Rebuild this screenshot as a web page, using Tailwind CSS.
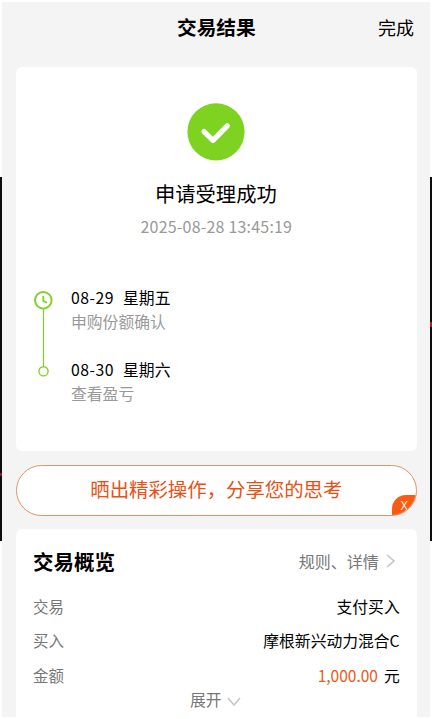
<!DOCTYPE html>
<html lang="zh-CN">
<head>
    <meta charset="UTF-8">
    <meta name="viewport" content="width=device-width, initial-scale=1.0">
    <title>交易结果</title>
    <script src="https://cdn.jsdelivr.net/npm/@tailwindcss/browser@4"></script>
</head>
<body class="relative h-[719px] overflow-hidden bg-white p-[2px] font-['Noto_Sans_CJK_SC',sans-serif] text-black whitespace-nowrap">
    <!-- Dark chart behind the page -->
    <div class="absolute left-0 top-[177px] w-full h-[364px] bg-[#0c0d10]">
        <div class="absolute left-0 top-[296px] w-[2px] h-[3px] bg-[#8c1c24]"></div>
        <div class="absolute right-0 top-[145px] w-[2px] h-[5px] bg-[#a8202a]"></div>
    </div>

    <div id="app" class="relative h-[715px] overflow-hidden bg-[#f4f4f4] pl-[14px] pr-[13.3px]">
        <!-- Header -->
        <header class="grid grid-cols-3 items-center h-[50px] mb-[15px]">
            <h1 class="col-start-2 text-center text-[19.7px] leading-[30px] font-bold">交易结果</h1>
            <button class="text-right text-[18px] leading-[30px] pr-[2.7px]">完成</button>
        </header>

        <!-- Result -->
        <section class="flex flex-col h-[384px] rounded-md bg-white pt-9 px-[17px]">
            <svg class="self-center -ml-px w-[58px] h-[58px]" viewBox="0 0 58 58" fill="none">
                <circle cx="29" cy="28.8" r="28.6" fill="#7ed321"/>
                <path d="M17 28.6 L26 37.3 L40.3 22.8" stroke="#fff" stroke-width="5.2" stroke-linecap="round" stroke-linejoin="round"/>
            </svg>
            <h2 class="mt-[17px] pr-px text-center text-[20.3px] leading-[30px]">申请受理成功</h2>
            <p class="mt-2 text-center text-[16px] leading-5 tracking-[0.2px] text-[#999]">2025-08-28 13:45:19</p>

            <!-- Timeline -->
            <div class="mt-[52px] flex gap-[18px]">
                <svg class="w-5 h-[116px]" viewBox="0 0 20 116" fill="none" stroke="#7ed321">
                    <circle cx="10.3" cy="12.3" r="8.3" stroke-width="1.9"/>
                    <path d="M10.3 8 V13 L14 14.7" stroke-width="1.8"/>
                    <path d="M10.5 21 V78.5" stroke-width="1.2"/>
                    <circle cx="10.5" cy="83.3" r="4.6" stroke-width="1.4"/>
                </svg>
                <div class="text-[15.8px] leading-5">
                    <p><span class="mr-[9px] tracking-[0.5px]">08-29</span>星期五</p>
                    <p class="mt-1 text-[#999]">申购份额确认</p>
                    <p class="mt-7"><span class="mr-[9px] tracking-[0.5px]">08-30</span>星期六</p>
                    <p class="mt-1 text-[#999]">查看盈亏</p>
                </div>
            </div>
        </section>

        <!-- Share banner -->
        <div class="relative mt-[14px] flex justify-center items-center h-[51px] pb-1 rounded-full border border-[#e0936a] bg-white overflow-hidden text-[19.4px] text-[#ea4f12]">
            晒出精彩操作，分享您的思考
            <button class="absolute -right-px -bottom-px flex items-center justify-center w-[25px] h-[21px] rounded-tl-[14px] bg-[#fb5a10] font-['Open_Sans',sans-serif] text-[12px] text-white">X</button>
        </div>

        <!-- Overview -->
        <section class="mt-[13px] h-[200px] rounded-t-md bg-white px-[17px] pt-[17px]">
            <div class="flex justify-between items-center h-[30px]">
                <h2 class="text-[20.5px] leading-[30px] font-bold">交易概览</h2>
                <a class="flex items-center text-[16px] leading-5 text-[#777]">
                    规则、详情
                    <svg class="ml-[7px] mr-[5px] w-[9px] h-[14px]" viewBox="0 0 9 14" fill="none" stroke="#c4c4c4" stroke-width="1.5"><path d="M1 1 L8 7 L1 13"/></svg>
                </a>
            </div>
            <dl class="mt-5 flex flex-col gap-[14.4px] text-[15.8px] leading-5">
                <div class="flex justify-between items-baseline h-5"><dt class="text-[15.5px] text-[#777]">交易</dt><dd>支付买入</dd></div>
                <div class="flex justify-between items-baseline h-5"><dt class="text-[15.5px] text-[#777]">买入</dt><dd>摩根新兴动力混合C</dd></div>
                <div class="flex justify-between items-baseline h-5"><dt class="text-[15.5px] text-[#777]">金额</dt><dd><span class="mr-[6px] text-[15.5px] text-[#ea5a1c]">1,000.00</span>元</dd></div>
            </dl>
            <button class="mx-auto mt-[5px] -translate-x-px flex items-center text-[15.8px] leading-5 text-[#777]">
                展开
                <svg class="ml-[5px] mt-[3px] w-[14px] h-[9px]" viewBox="0 0 14 9" fill="none" stroke="#c4c4c4" stroke-width="1.5"><path d="M1 1 L7 8 L13 1"/></svg>
            </button>
        </section>
    </div>
</body>
</html>
